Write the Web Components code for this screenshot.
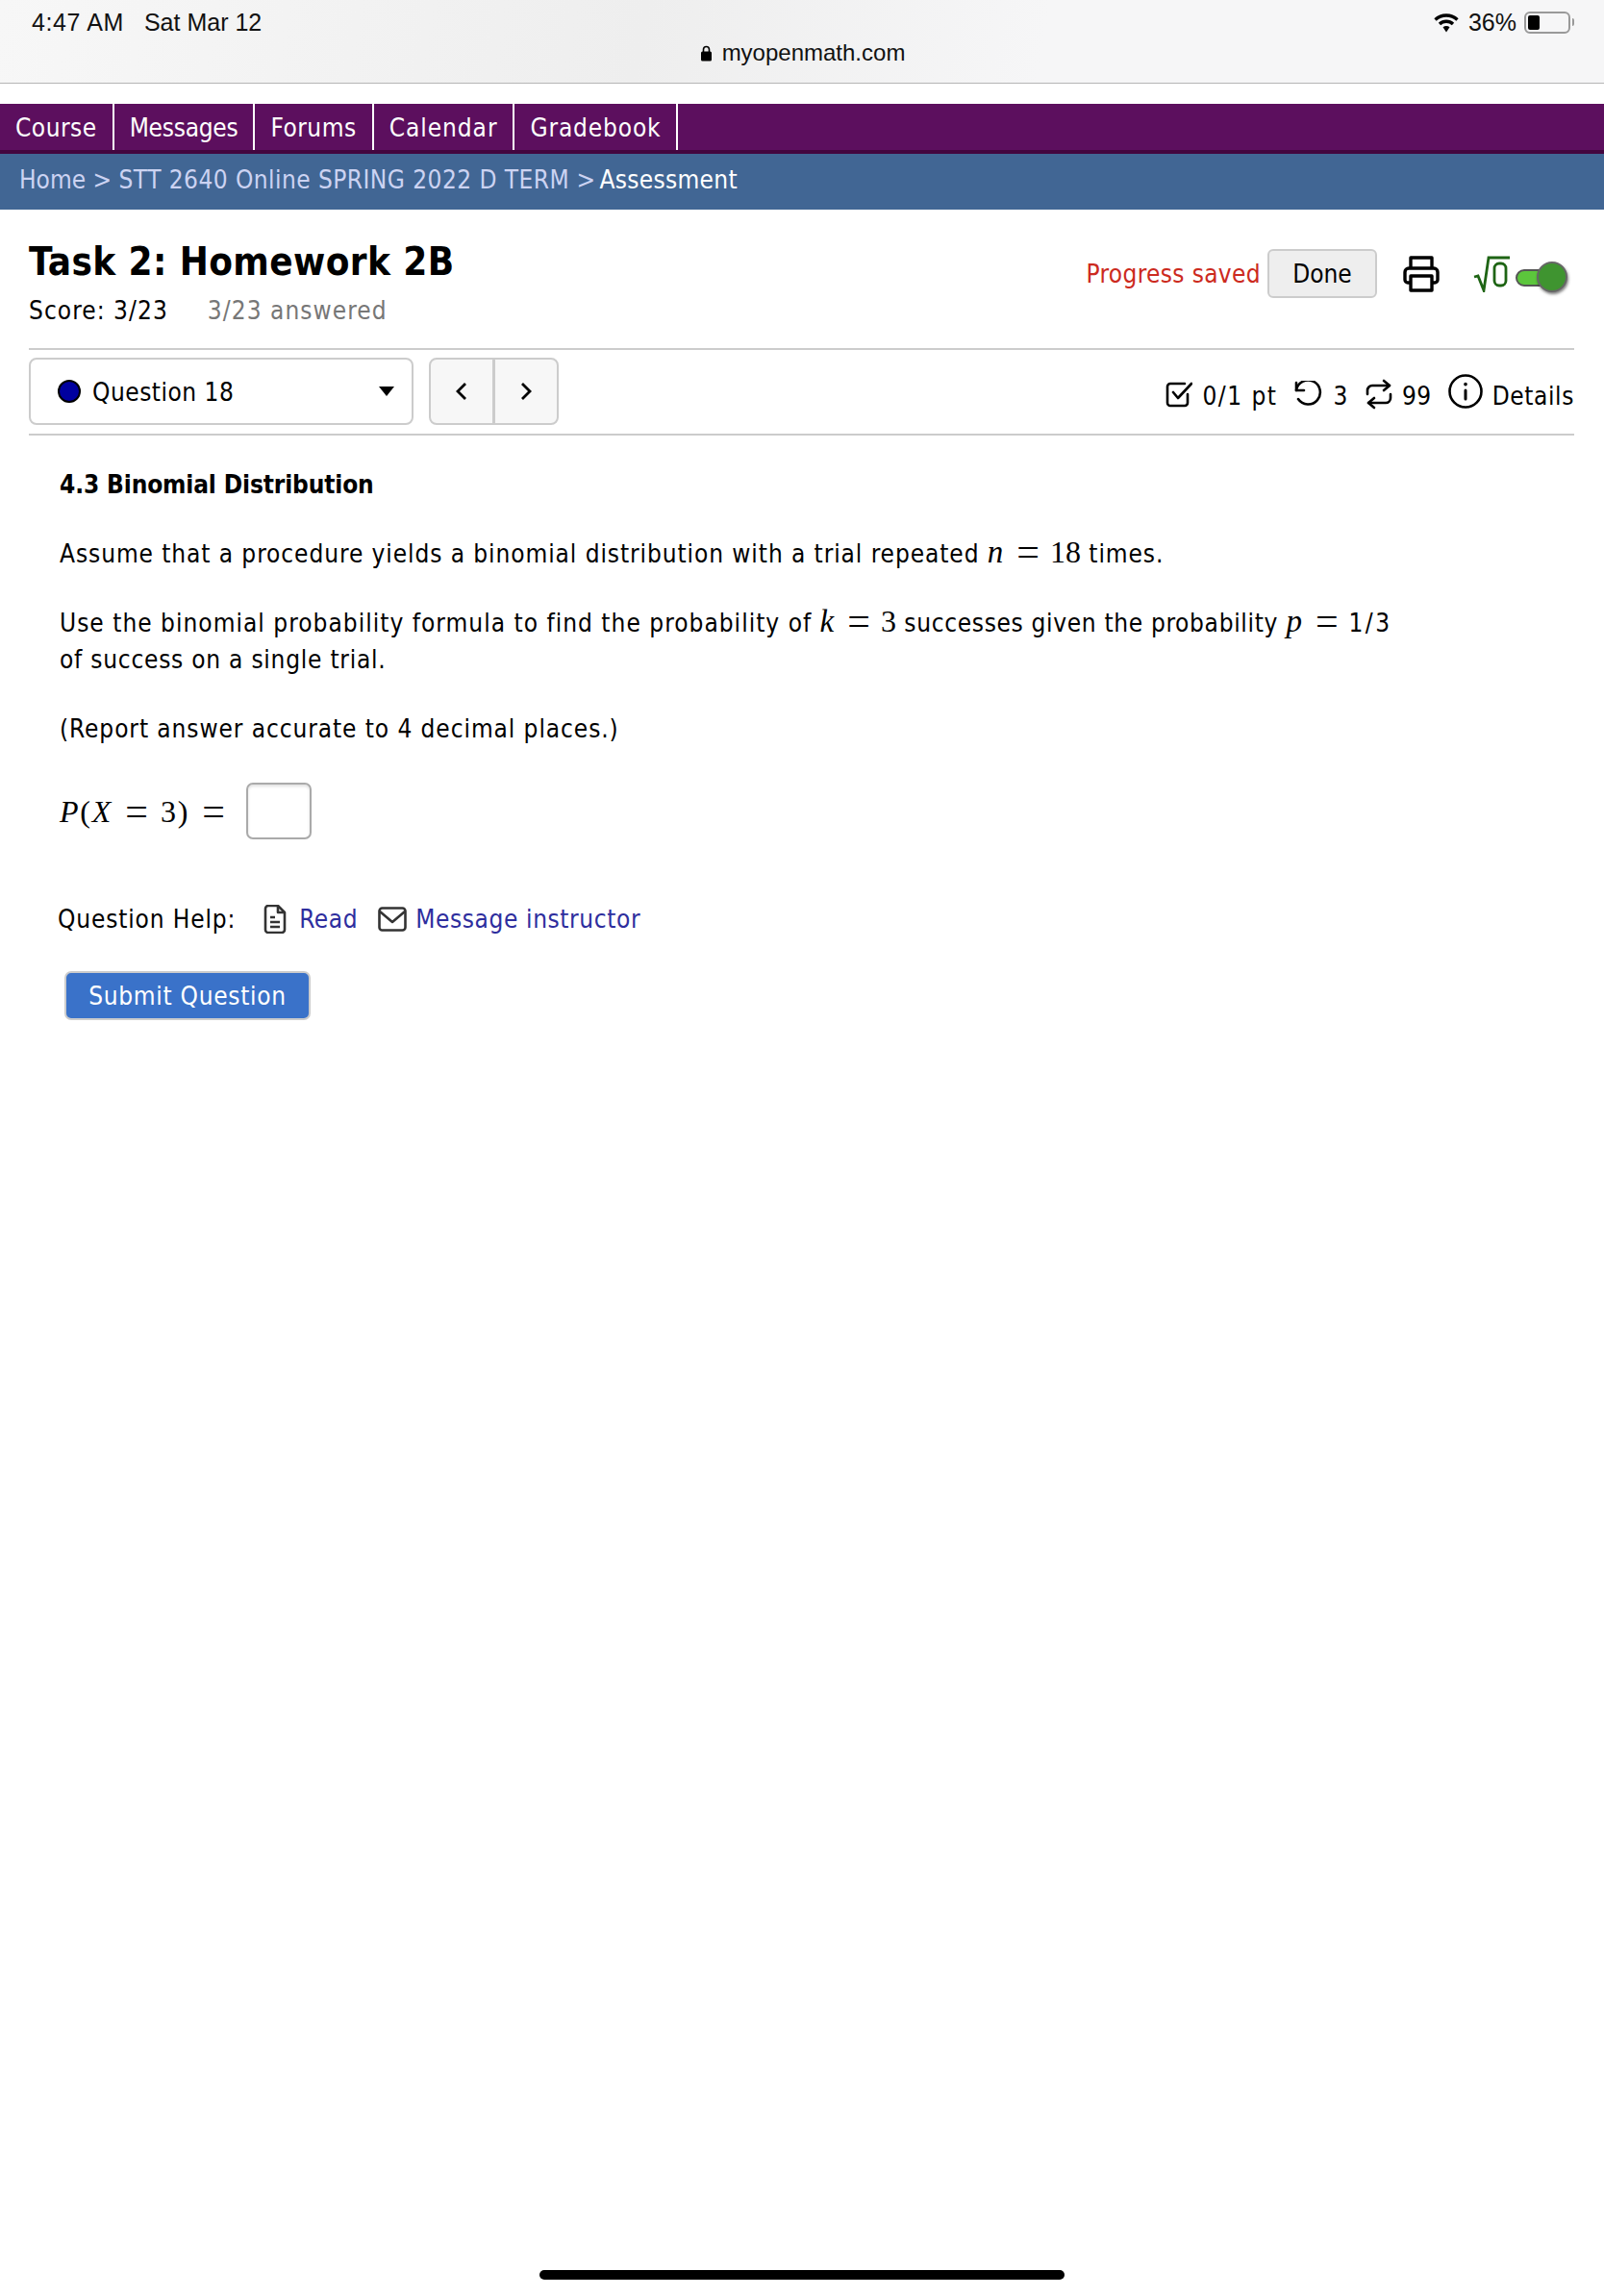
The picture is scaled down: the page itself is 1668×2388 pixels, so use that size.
<!DOCTYPE html>
<html lang="en"><head><meta charset="utf-8"><title>Homework</title>
<style>
html,body{margin:0;padding:0;background:#fff}
body{width:1668px;height:2388px;display:flex;flex-direction:column;font-family:"DejaVu Sans",sans-serif;font-stretch:condensed;font-size:26px;color:#000}
</style></head><body>
<status-bar></status-bar>
<site-nav></site-nav>
<bread-crumb></bread-crumb>
<task-header></task-header>
<question-bar></question-bar>
<question-body></question-body>
<home-bar></home-bar>
<script>
const define=(name,html)=>customElements.define(name,class extends HTMLElement{constructor(){super();this.attachShadow({mode:'open'}).innerHTML=html}});
define('status-bar',`<style>
:host{display:block;height:86px;border-bottom:1px solid #b5b5b5;background:linear-gradient(100deg,#f7f7f7,#eee 40%,#f6f6f7 65%,#f6f6f7);font-family:"Liberation Sans",sans-serif;font-stretch:normal;font-size:25px;color:#111}
.top{display:flex;align-items:center;height:46px;padding:0 31px 0 33px}
.top b{font-weight:400;margin-right:21px}
.top b:first-child{letter-spacing:.6px}
.right{margin-left:auto;display:flex;align-items:center;gap:8px}
.right svg{margin-right:1px}
.bat{width:48px;height:23px;box-sizing:border-box;border:2px solid #999;border-radius:6px;padding:2px;display:block}
.bat i{display:block;width:12px;height:100%;background:#000;border-radius:2px}
.nub{width:2px;height:8px;background:#999;margin-left:-6px;border-radius:0 2px 2px 0}
.url{display:flex;align-items:center;justify-content:center;gap:11px;height:18px;font-size:24px;padding-left:2px}
</style>
<div class="top"><b>4:47 AM</b><b>Sat Mar 12</b>
<div class="right"><svg width="28" height="21" viewBox="0 0 26 21"><path d="M1.500 7.500C8 1.500 18 1.500 24.500 7.500M6 12c4-3.700 10-3.700 14 0" fill="none" stroke="#000" stroke-width="3.4"/><path d="M9.500 15.200c2-1.600 5-1.600 7 0L13 20.500z" fill="#000"/></svg><span>36%</span><span class="bat"><i></i></span><span class="nub"></span></div></div>
<div class="url"><svg width="11" height="17" viewBox="0 0 11 17"><path d="M2.500 7V4.500a3 3 0 0 1 6 0V7" fill="none" stroke="#000" stroke-width="1.6"/><rect y="6.500" width="11" height="10" rx="1.500" fill="#000"/></svg><span>myopenmath.com</span></div>`);
define('nav-item',`<style>:host{display:flex;align-items:center;padding:1px 16px 0;border-right:2px solid #fff;color:#fff;letter-spacing:var(--ls,.7px)}</style><slot></slot>`);
define('site-nav',`<style>:host{display:flex;height:48px;margin-top:21px;background:#5c0f5e;border-bottom:4px solid #43063f}</style>
<nav-item style="--ls:.5px">Course</nav-item><nav-item style="--ls:-.25px">Messages</nav-item><nav-item style="--ls:.5px">Forums</nav-item><nav-item style="--ls:.95px">Calendar</nav-item><nav-item style="--ls:.85px">Gradebook</nav-item>`);
define('bread-crumb',`<style>:host{display:flex;align-items:center;height:58px;box-sizing:border-box;padding:0 0 5px 20px;background:#416694;color:#ccd3f2;white-space:pre}b{font-weight:400;color:#fff;letter-spacing:.3px;margin-left:-3px}span{letter-spacing:.45px}</style>Home &gt; <span>STT 2640 Online SPRING 2022 D TERM</span> &gt; <b>Assessment</b>`);
define('task-header',`<style>
:host{display:flex;margin:0 31px 0 30px;height:146px;box-sizing:border-box;border-bottom:2px solid #ccc;justify-content:space-between}
h1{margin:30px 0 0;font-size:40px;font-weight:700;line-height:48px;letter-spacing:.4px}
.sc{margin-top:11px;display:flex;gap:41px;line-height:32px;letter-spacing:1.05px}.sc span+span{color:#777}
.r{display:flex;align-items:center;height:51px;margin-top:41px;padding-right:7px}
.ps{color:#cc2a20;margin-right:7px;letter-spacing:.35px}
.done{width:114px;height:51px;box-sizing:border-box;border:2px solid #ccc;border-radius:6px;background:#eee;display:flex;align-items:center;justify-content:center}
svg{display:block}
.sq{display:flex;margin-left:35px;position:relative;width:98px;height:38px}
.tr{position:absolute;left:44px;top:14px;width:34px;height:18px;box-sizing:border-box;border:2px solid #555;border-radius:9px;background:#5cc63c}
.kn{position:absolute;left:66px;top:6px;width:32px;height:32px;box-sizing:border-box;border:2px solid #666;border-radius:50%;background:#3f9430;box-shadow:1px 2px 3px rgba(0,0,0,.5)}
</style>
<div><h1>Task 2: Homework 2B</h1><div class="sc"><span>Score: 3/23</span><span>3/23 answered</span></div></div>
<div class="r"><span class="ps">Progress saved</span><span class="done">Done</span>
<svg style="margin-left:27px" width="38" height="38" viewBox="0 0 38 38" fill="none" stroke="#000" stroke-width="3.4" stroke-linejoin="round"><path d="M8 13V2h22v11"/><path d="M8 28H5a3 3 0 0 1-3-3V17a4 4 0 0 1 4-4h26a4 4 0 0 1 4 4v8a3 3 0 0 1-3 3h-3"/><path d="M8 21h22v15H8z"/></svg>
<span class="sq"><svg width="40" height="38" viewBox="0 0 40 38" fill="none" stroke="#1e6414" stroke-width="2.8"><path d="M1 22l4-1 6 15L16 2h22"/><rect x="22" y="8" width="12" height="23" rx="5"/></svg><span class="tr"></span><span class="kn"></span></span></div>`);
define('question-bar',`<style>
:host{display:flex;align-items:flex-start;margin:0 31px 0 30px;height:89px;box-sizing:border-box;padding-top:8px;border-bottom:2px solid #ccc;gap:16px;letter-spacing:.5px}
.sel{width:400px;height:70px;box-sizing:border-box;border:2px solid #ccc;border-radius:8px;display:flex;align-items:center;padding:0 18px 0 28px}
.dot{width:24px;height:24px;box-sizing:border-box;border:2px solid #000;border-radius:50%;background:#00009f;margin-right:12px}
.tri{margin-left:auto;width:0;height:0;border:8px solid transparent;border-top:10px solid #000;border-bottom:0}
.btns{display:flex;width:135px;height:70px;box-sizing:border-box;border:2px solid #ccc;border-radius:8px;background:#f7f7f7}
.btns div{flex:1;display:flex;align-items:center;justify-content:center}.btns div+div{border-left:3px solid #ccc}
.st{margin-left:auto;display:flex;align-items:center;height:70px}
svg{display:block;flex:none}
.st svg{fill:none;stroke:#000;stroke-width:2.6;stroke-linecap:round;stroke-linejoin:round;margin-top:6px}
.st svg.info{margin-top:0}
.t{padding-top:10px}
</style>
<div class="sel"><span class="dot"></span><span style="padding-top:1px">Question 18</span><span class="tri"></span></div>
<div class="btns"><div><svg width="14" height="22" viewBox="0 0 14 22"><path d="M11 3L3 11l8 8" fill="none" stroke="#000" stroke-width="2.8"/></svg></div><div><svg width="14" height="22" viewBox="0 0 14 22"><path d="M3 3l8 8-8 8" fill="none" stroke="#000" stroke-width="2.8"/></svg></div></div>
<div class="st">
<svg style="margin-right:1px" width="28" height="28" viewBox="0 0 28 28"><path d="M23 14v9a3 3 0 0 1-3 3H5a3 3 0 0 1-3-3V6a3 3 0 0 1 3-3h15"/><path d="M8 12l5 6L27 3"/></svg>
<span class="t" style="margin-left:9px;letter-spacing:1.5px">0/1 pt</span>
<svg style="margin-left:16px" width="30" height="28" viewBox="0 0 30 28"><path d="M3 2v8h8"/><path d="M3 10a12.500 12.500 0 1 1 2 9"/></svg>
<span class="t" style="margin-left:12px">3</span>
<svg style="margin-left:18px" width="28" height="32" viewBox="0 0 28 32"><path d="M19 2l6 5-6 5"/><path d="M25 7H7a5 5 0 0 0-5 5v4"/><path d="M9 30l-6-5 6-5"/><path d="M3 25h18a5 5 0 0 0 5-5v-4"/></svg>
<span class="t" style="margin-left:10px">99</span>
<svg class="info" style="margin-left:17px" width="36" height="36" viewBox="0 0 36 36"><circle cx="18" cy="18" r="16.500"/><path d="M18 17v9" stroke-width="3"/><path d="M18 10.500v.2" stroke-width="3.6"/></svg>
<span class="t" style="margin-left:10px;letter-spacing:.6px">Details</span>
</div>`);
define('question-body',`<style>
:host{display:block;padding:32px 0 0 62px;line-height:38px;letter-spacing:.92px}
h4{margin:0;font-size:26px;font-weight:700;line-height:38px;letter-spacing:-.13px}
p{margin:34px 0 0}
i,.m,.e{font-family:"Liberation Serif",serif;font-stretch:normal;letter-spacing:0;line-height:0}
i{font-size:33px}
.m{font-size:32px}
.e{font-size:42px;margin:0 11px 0 14px;vertical-align:-3px}
.eq{display:flex;align-items:center;margin-top:37px;height:59px;gap:22px;white-space:pre;font-family:"Liberation Serif",serif;font-stretch:normal;font-size:32px;letter-spacing:1.8px}
.eq .e{margin:0 13px}
.eq .e:last-child{margin-right:0}
.inp{width:68px;height:59px;box-sizing:border-box;border:2px solid #aaa;border-radius:7px;box-shadow:inset 0 2px 3px rgba(0,0,0,.12);background:#fff}
.help{display:flex;align-items:center;margin:64px 0 0 -2px;height:38px;letter-spacing:.85px}
.help a{color:#2e2e9e;letter-spacing:.6px}
.help svg{fill:none;stroke:#333;stroke-width:2.6;stroke-linejoin:round;display:block}
.btn{margin:35px 0 0 5px;width:256px;height:51px;box-sizing:border-box;border:2px solid #ccc;border-radius:7px;background:#3a72c9;color:#fff;display:flex;align-items:center;justify-content:center;letter-spacing:.7px}
.a{letter-spacing:1.02px}.b{letter-spacing:.67px}.c{letter-spacing:.76px}.d{letter-spacing:2.4px}
</style>
<h4>4.3 Binomial Distribution</h4>
<p>Assume that a procedure yields a binomial distribution with a trial repeated <i>n</i><span class="e">=</span><span class="m">18</span> times.</p>
<p><span class="a">Use the binomial probability formula to find the probability of</span> <i>k</i><span class="e">=</span><span class="m">3</span> <span class="b">successes given the probability</span> <i>p</i><span class="e">=</span><span class="d">1/3</span><br><span class="c">of success on a single trial.</span></p>
<p>(Report answer accurate to 4 decimal places.)</p>
<div class="eq"><span><em>P</em>(<em>X</em><span class="e">=</span>3)<span class="e">=</span></span><span class="inp"></span></div>
<div class="help"><span>Question Help:</span>
<svg style="margin-left:29px" width="24" height="30" viewBox="0 0 24 30"><path d="M2 4a3 3 0 0 1 3-3h10l7 7v18a3 3 0 0 1-3 3H5a3 3 0 0 1-3-3z"/><path d="M15 1v7h7"/><path d="M7 13h5M7 18h10M7 23h10"/></svg>
<a style="margin-left:13px">Read</a>
<svg style="margin-left:21px" width="30" height="26" viewBox="0 0 30 26"><rect x="1.500" y="1.500" width="27" height="23" rx="3"/><path d="M2 5l13 11L28 5"/></svg>
<a style="margin-left:9px">Message instructor</a></div>
<div class="btn">Submit Question</div>`);
define('home-bar',`<style>:host{display:block;width:546px;height:10px;margin:auto auto 17px;background:#000;border-radius:5px}</style>`);
</script>
</body></html>
